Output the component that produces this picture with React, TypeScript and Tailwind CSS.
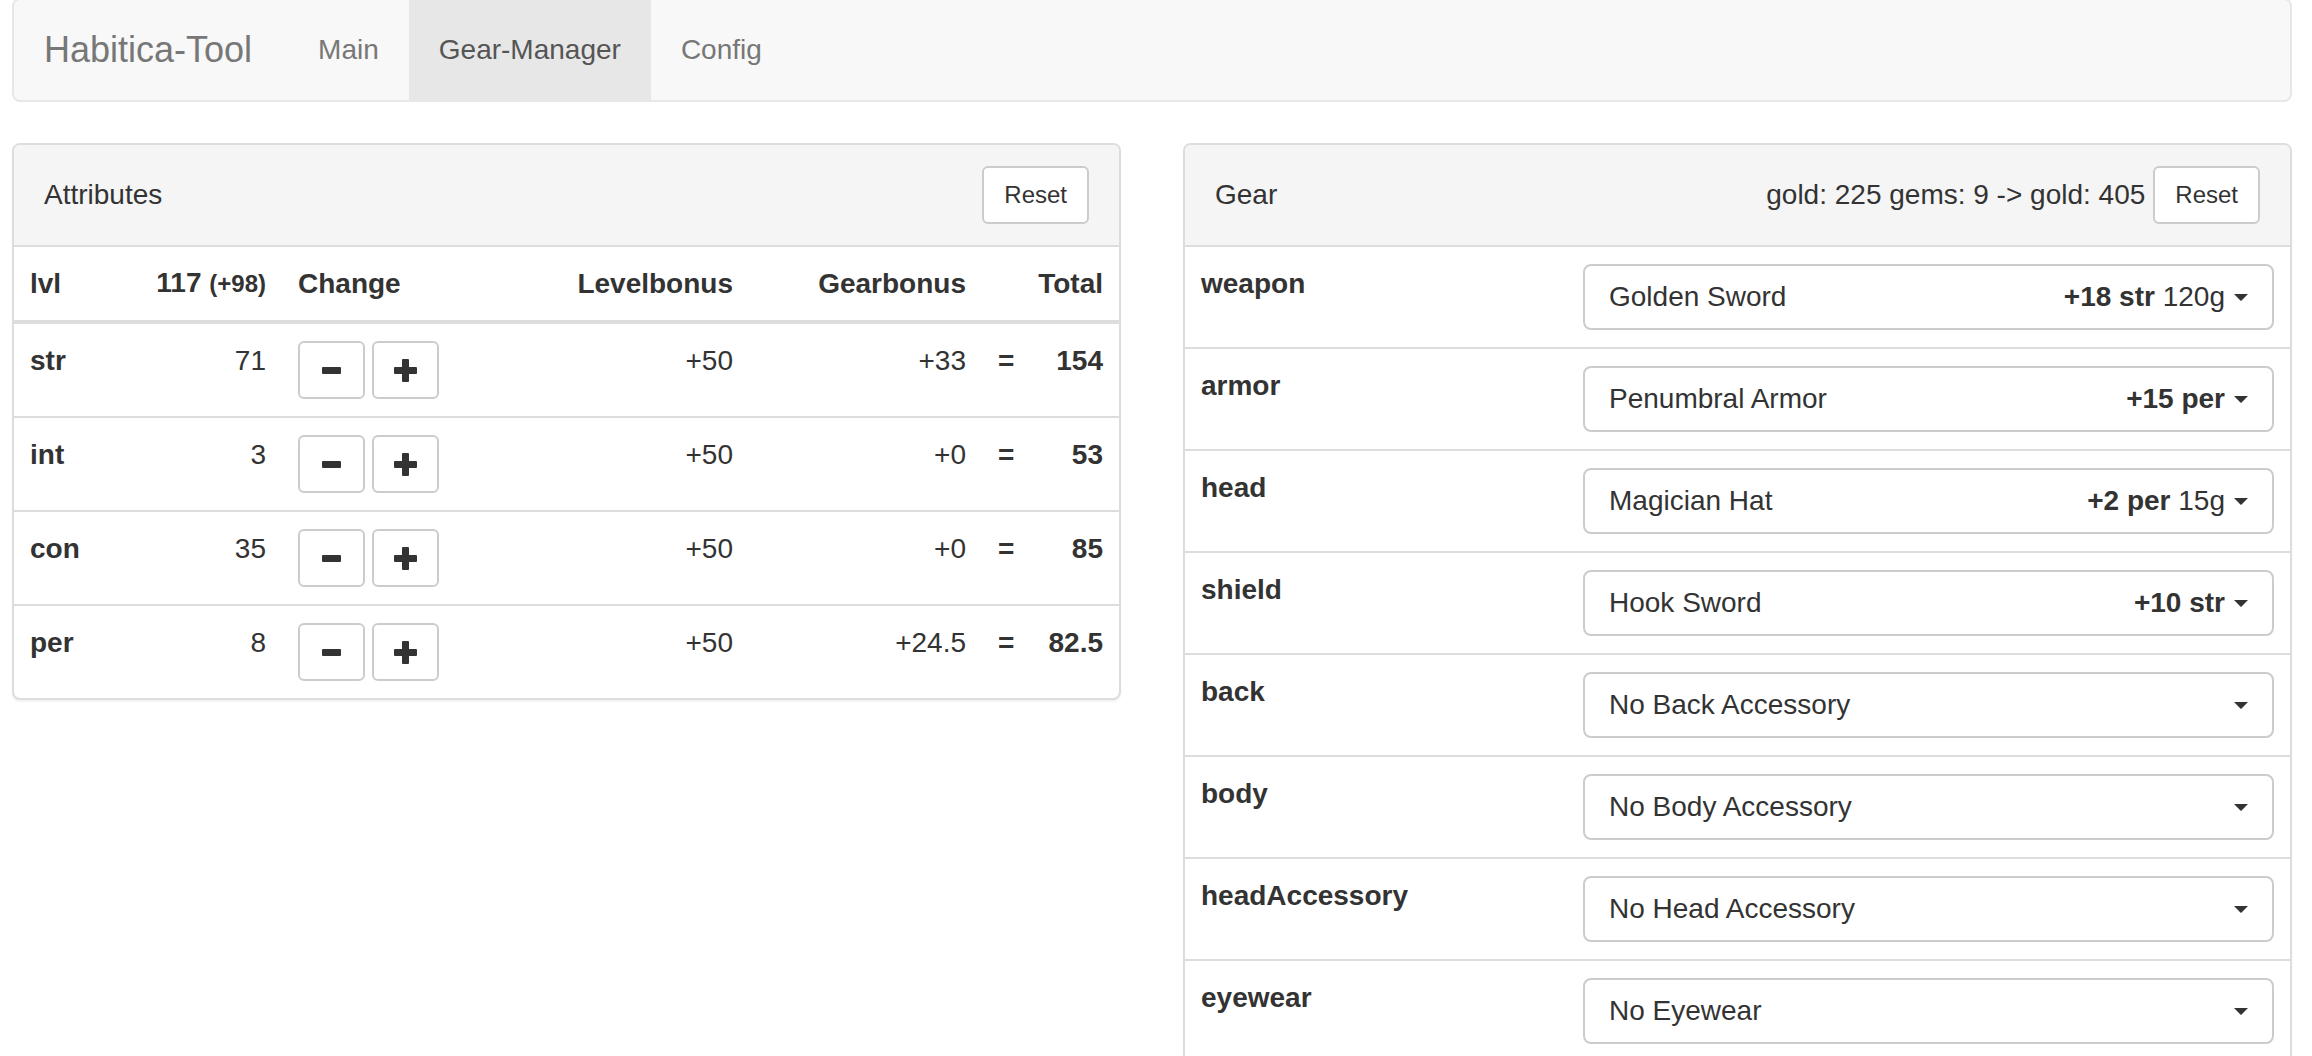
import { useState } from "react";

type Attr = { name: string; points: number; level: number; gear: number };

const ATTRS: Attr[] = [
  { name: "str", points: 71, level: 50, gear: 33 },
  { name: "int", points: 3,  level: 50, gear: 0 },
  { name: "con", points: 35, level: 50, gear: 0 },
  { name: "per", points: 8,  level: 50, gear: 24.5 },
];

type Slot = { slot: string; item: string; bonus?: string; cost?: string };

const GEAR: Slot[] = [
  { slot: "weapon",        item: "Golden Sword",      bonus: "+18 str", cost: "120g" },
  { slot: "armor",         item: "Penumbral Armor",   bonus: "+15 per" },
  { slot: "head",          item: "Magician Hat",      bonus: "+2 per",  cost: "15g" },
  { slot: "shield",        item: "Hook Sword",        bonus: "+10 str" },
  { slot: "back",          item: "No Back Accessory" },
  { slot: "body",          item: "No Body Accessory" },
  { slot: "headAccessory", item: "No Head Accessory" },
  { slot: "eyewear",       item: "No Eyewear" },
];

function MinusIcon() {
  return (
    <svg width="19" height="7" viewBox="0 0 19 7">
      <rect width="19" height="7" rx="1" fill="#333" />
    </svg>
  );
}

function PlusIcon() {
  return (
    <svg width="23" height="23" viewBox="0 0 23 23">
      <rect x="8" y="0" width="7" height="23" rx="1" fill="#333" />
      <rect x="0" y="8" width="23" height="7" rx="1" fill="#333" />
    </svg>
  );
}

function Caret() {
  return (
    <svg width="14" height="7" viewBox="0 0 14 7" className="ml-[9px] shrink-0">
      <path d="M0 0 H14 L7.6 6.6 Q7 7 6.4 6.6 Z" fill="#333" />
    </svg>
  );
}

function ResetButton() {
  return (
    <button className="h-[58px] px-[20px] text-[24px] leading-[36px] bg-white text-[#333]
                       border-2 border-[#ccc] rounded-[6px] hover:bg-[#e6e6e6]">
      Reset
    </button>
  );
}

function StepButton({ children, onClick }: { children: React.ReactNode; onClick: () => void }) {
  return (
    <button
      onClick={onClick}
      className="h-[58px] w-[67px] flex items-center justify-center bg-white
                 border-2 border-[#ccc] rounded-[6px] hover:bg-[#e6e6e6]"
    >
      {children}
    </button>
  );
}

function fmt(n: number) {
  return `+${n}`;
}

function AttributesPanel() {
  const [attrs, setAttrs] = useState(ATTRS);

  function change(i: number, d: number) {
    setAttrs(a => a.map((x, j) => (j === i ? { ...x, points: x.points + d } : x)));
  }

  return (
    <div className="border-2 border-[#ddd] rounded-[8px] overflow-hidden bg-white
                    shadow-[0_2px_2px_rgba(0,0,0,0.05)]">
      <div className="h-[102px] px-[30px] flex items-center justify-between
                      bg-[#f5f5f5] border-b-2 border-[#ddd]">
        <span>Attributes</span>
        <ResetButton />
      </div>

      <table className="w-full table-fixed border-separate border-spacing-0">
        <colgroup>
          <col className="w-[125px]" />
          <col className="w-[143px]" />
          <col className="w-[278px]" />
          <col className="w-[189px]" />
          <col className="w-[233px]" />
          <col className="w-[38px]" />
          <col className="w-[99px]" />
        </colgroup>
        <thead>
          <tr className="font-bold">
            <th className="px-[16px] py-[16px] text-left border-b-4 border-[#ddd]">lvl</th>
            <th className="px-[16px] py-[16px] text-right whitespace-nowrap border-b-4 border-[#ddd]">
              117 <small className="text-[24px]">(+98)</small>
            </th>
            <th className="px-[16px] py-[16px] text-left border-b-4 border-[#ddd]">Change</th>
            <th className="px-[16px] py-[16px] text-right border-b-4 border-[#ddd]">Levelbonus</th>
            <th className="px-[16px] py-[16px] text-right border-b-4 border-[#ddd]">Gearbonus</th>
            <th className="py-[16px] border-b-4 border-[#ddd]"></th>
            <th className="px-[16px] py-[16px] text-right border-b-4 border-[#ddd]">Total</th>
          </tr>
        </thead>
        <tbody>
          {attrs.map((a, i) => {
            const cell = i === 0 ? "py-[17px] align-top" : "py-[17px] align-top border-t-2 border-[#ddd]";
            return (
              <tr key={a.name}>
                <td className={`${cell} px-[16px] font-bold`}>{a.name}</td>
                <td className={`${cell} px-[16px] text-right`}>{a.points}</td>
                <td className={`${cell} px-[16px]`}>
                  <div className="flex gap-[7px]">
                    <StepButton onClick={() => change(i, -1)}><MinusIcon /></StepButton>
                    <StepButton onClick={() => change(i, 1)}><PlusIcon /></StepButton>
                  </div>
                </td>
                <td className={`${cell} px-[16px] text-right`}>{fmt(a.level)}</td>
                <td className={`${cell} px-[16px] text-right`}>{fmt(a.gear)}</td>
                <td className={`${cell} pl-[16px] font-bold`}>=</td>
                <td className={`${cell} px-[16px] text-right font-bold`}>
                  {a.points + a.level + a.gear}
                </td>
              </tr>
            );
          })}
        </tbody>
      </table>
    </div>
  );
}

function GearPanel() {
  return (
    <div className="border-2 border-[#ddd] rounded-[8px] overflow-hidden bg-white
                    shadow-[0_2px_2px_rgba(0,0,0,0.05)]">
      <div className="h-[102px] px-[30px] flex items-center justify-between
                      bg-[#f5f5f5] border-b-2 border-[#ddd]">
        <span>Gear</span>
        <div className="flex items-center gap-[8px]">
          <span>gold: 225 gems: 9 -&gt; gold: 405</span>
          <ResetButton />
        </div>
      </div>

      <table className="w-full table-fixed border-separate border-spacing-0">
        <colgroup>
          <col className="w-[382px]" />
          <col />
        </colgroup>
        <tbody>
          {GEAR.map((g, i) => {
            const cell = i === 0 ? "px-[16px] py-[17px] align-top" : "px-[16px] py-[17px] align-top border-t-2 border-[#ddd]";
            return (
              <tr key={g.slot}>
                <td className={`${cell} font-bold`}>{g.slot}</td>
                <td className={cell}>
                  <button
                    className="w-full h-[66px] px-[24px] flex items-center justify-between
                               bg-white text-[#333] border-2 border-[#ccc] rounded-[8px]
                               hover:bg-[#e6e6e6]"
                  >
                    <span>{g.item}</span>
                    <span className="flex items-center whitespace-nowrap">
                      {g.bonus && <b>{g.bonus}</b>}
                      {g.cost && <span>&nbsp;{g.cost}</span>}
                      <Caret />
                    </span>
                  </button>
                </td>
              </tr>
            );
          })}
        </tbody>
      </table>
    </div>
  );
}

export default function App() {
  return (
    <div className="min-h-screen bg-white pl-[12px] pr-[20px] text-[28px] leading-[40px] text-[#333]
                    font-['Liberation_Sans','Helvetica_Neue',Arial,sans-serif]">
      <nav className="-mt-[2px] mb-[41px] h-[104px] flex bg-[#f8f8f8] border-2 border-[#e7e7e7]
                      rounded-[8px] overflow-hidden">
        <a href="#" className="pl-[30px] pr-[36px] flex items-center text-[36px] text-[#777]">
          Habitica-Tool
        </a>
        <a href="#" className="px-[30px] flex items-center text-[#777] hover:text-[#333]">Main</a>
        <a href="#" className="px-[30px] flex items-center bg-[#e7e7e7] text-[#555]">Gear-Manager</a>
        <a href="#" className="px-[30px] flex items-center text-[#777] hover:text-[#333]">Config</a>
      </nav>

      <div className="grid grid-cols-2 gap-x-[62px] items-start">
        <AttributesPanel />
        <GearPanel />
      </div>
    </div>
  );
}
